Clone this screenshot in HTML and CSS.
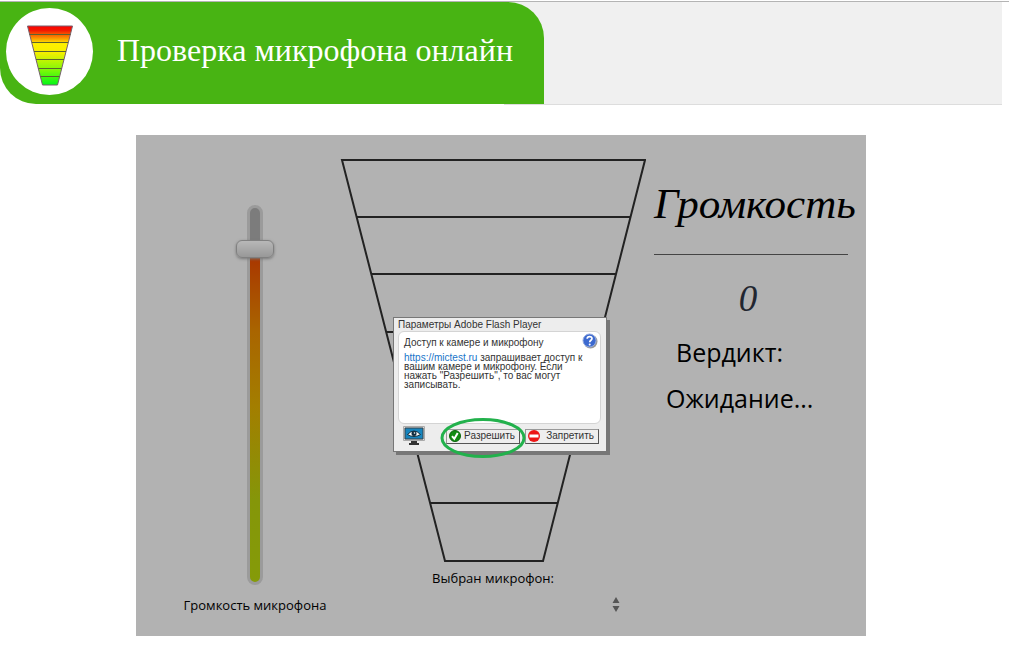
FILE: index.html
```html
<!DOCTYPE html>
<html lang="ru">
<head>
<meta charset="utf-8">
<title>Проверка микрофона онлайн</title>
<link rel="stylesheet" href="styles.css">
</head>
<body>
<header class="site-header">
  <div class="brand">
    <a class="logo" href="#" aria-label="На главную">
      <svg width="48" height="64" viewBox="0 0 48 64" aria-hidden="true">
        <defs>
          <linearGradient id="level" x1="0" y1="0" x2="0" y2="1">
            <stop offset="0" stop-color="#f00"/>
            <stop offset=".07" stop-color="#f21400"/>
            <stop offset=".3" stop-color="#fff000"/>
            <stop offset=".45" stop-color="#f5f000"/>
            <stop offset=".75" stop-color="#7df808"/>
            <stop offset="1" stop-color="#00f818"/>
          </linearGradient>
        </defs>
        <path d="M1.500 2H46.500L31.500 61H16.500Z" fill="url(#level)" stroke="#77606e"/>
        <path d="M3.500 10.500H44.500M6 18.500H42M8 27.500H40M10 35.500H38M12.500 44.500H35.500M14.500 52.500H33.500" stroke="#5b6330" fill="none"/>
      </svg>
    </a>
    <h1 class="title">Проверка микрофона онлайн</h1>
  </div>
</header>
<div class="page">
<main class="panel">
  <section class="volume">
    <input class="slider" id="volume" type="range" min="0" max="100" value="91">
    <label class="caption" for="volume">Громкость микрофона</label>
  </section>
  <section class="meter">
    <svg class="funnel" width="306" height="404" viewBox="0 0 306 404" aria-hidden="true">
      <path d="M2 2H305L203 403H105ZM17 59H290M31 116H276M46 174H261M61 231H247M76 288H232M90 345H217" fill="none" stroke="#222" stroke-width="2"/>
    </svg>
    <label class="caption" for="mic">Выбран микрофон:</label>
    <div class="picker">
      <select class="mic-select" id="mic"><option value=""></option></select>
      <svg class="arrows" width="8" height="16" viewBox="0 0 8 16" aria-hidden="true"><path d="M.5 7L4 1L7.500 7ZM.5 10H7.500L4 16Z" fill="#555"/></svg>
    </div>
  </section>
  <section class="result">
    <h2 class="result-title">Громкость</h2>
    <output class="value">0</output>
    <p class="verdict">Вердикт:</p>
    <p class="status">Ожидание...</p>
  </section>

  <div class="dialog" role="dialog" aria-labelledby="dialog-title">
    <h3 class="dialog-title" id="dialog-title">Параметры Adobe Flash Player</h3>
    <div class="dialog-body">
      <button class="help" type="button" aria-label="Справка">
        <svg width="16" height="16" viewBox="0 0 16 16" aria-hidden="true">
          <circle cx="8.500" cy="8.500" r="7" fill="#999"/>
          <circle cx="7.500" cy="7.500" r="6.500" fill="#3c69cf" stroke="#91a9df"/>
          <path d="M5.200 5.700C5.200 2.800 10 2.900 10 5.500C10 7.300 7.700 7.200 7.700 9.300" fill="none" stroke="#fff" stroke-width="1.700"/>
          <circle cx="7.700" cy="11.500" r="1" fill="#fff"/>
        </svg>
      </button>
      <p class="lead">Доступ к камере и микрофону</p>
      <p class="request"><a class="origin" href="#">https://mictest.ru</a> запрашивает доступ к вашим камере и микрофону. Если нажать "Разрешить", то вас могут записывать.</p>
    </div>
    <div class="dialog-actions">
      <svg class="monitor" width="22" height="20" viewBox="0 0 22 20" aria-hidden="true">
        <path d="M.5 .5H21.500V14.500H.5Z" fill="#ddd" stroke="#aaa"/>
        <path d="M2 2H20V13H2Z" fill="#1784bd" stroke="#34434b"/>
        <path d="M8 15H14V17H16V19H6V17H8Z" fill="#333"/>
        <path d="M4.500 8.500Q11 1.500 17.500 8.500Q11 12.500 4.500 8.500Z" fill="#fff" stroke="#152c38"/>
        <circle cx="11" cy="7.500" r="2.500" fill="#102c3e"/><circle cx="11.500" cy="7" r=".8" fill="#fff"/>
      </svg>
      <button class="action" type="button">
        <svg width="12" height="12" viewBox="0 0 12 12" aria-hidden="true"><circle cx="6" cy="6" r="5.500" fill="#128c12" stroke="#0a650a"/><path d="M3 6.200L5.300 8.800L8.700 3" fill="none" stroke="#fff" stroke-width="2"/></svg>
        <span>Разрешить</span>
      </button>
      <button class="action" type="button">
        <svg width="12" height="12" viewBox="0 0 12 12" aria-hidden="true"><circle cx="6" cy="6" r="6" fill="#ec1515"/><path d="M1.500 4.500H10.500V7.500H1.500Z" fill="#fff"/></svg>
        <span>Запретить</span>
      </button>
    </div>
    <svg class="highlight" width="86" height="42" viewBox="0 0 86 42" aria-hidden="true"><ellipse cx="43" cy="21" rx="41" ry="18.500" fill="none" stroke="#22b14c" stroke-width="3"/></svg>
  </div>
</main>
</div>
</body>
</html>
```
FILE: styles.css
```css
* { box-sizing: border-box; }
body {
  margin: 0;
  padding-top: 1px;
  background: #fff;
  color: #000;
  font-family: "Open Sans", "Noto Sans", sans-serif;
}
h1, h2, h3, p { margin: 0; font-weight: 400; }

.site-header {
  display: flex;
  border-top: 1px solid #b4b4b4;
  padding-right: 7px;
}
.site-header::after {
  content: "";
  flex: 1;
  margin-left: -40px;
  background: #f0f0f0;
  border-bottom: 1px solid #ddd;
}
.brand {
  position: relative;
  z-index: 1;
  display: flex;
  align-items: center;
  gap: 24px;
  min-height: 102px;
  margin-bottom: 1px;
  padding: 0 31px 4px 6px;
  background: #48b413;
  border-radius: 0 36px 0 36px;
}
.logo {
  display: flex;
  align-items: center;
  justify-content: center;
  width: 87px;
  height: 87px;
  padding-top: 10px;
  background: #fff;
  border-radius: 50%;
}
.title {
  padding-bottom: 2px;
  color: #fff;
  font: 32px/36px "Liberation Serif", serif;
  white-space: nowrap;
}

.page { padding: 30px 7px 14px 0; }
.panel {
  position: relative;
  display: grid;
  grid-template-columns: 204px 306px 1fr;
  max-width: 730px;
  margin: 0 auto;
  padding: 23px 0 22px;
  background: #b2b2b2;
}
.caption { font-size: 13px; line-height: 18px; white-space: nowrap; }

.volume {
  display: flex;
  flex-direction: column;
  align-items: center;
  gap: 11px;
  padding: 47px 0 0 34px;
}
.slider {
  appearance: none;
  writing-mode: vertical-lr;
  direction: rtl;
  width: 38px;
  height: 380px;
  margin: 0;
  background: transparent;
}
.slider::-webkit-slider-runnable-track {
  width: 16px;
  height: 380px;
  border: 3px solid #9b9b9b;
  border-radius: 8px;
  background: linear-gradient(#7c7c7c 0 10%, #a93700 13%, #a96500 33%, #a37e00 53%, #859609 78%, #859b09);
}
.slider::-webkit-slider-thumb {
  appearance: none;
  width: 38px;
  height: 18px;
  margin-left: -14px;
  border: 1px solid #808080;
  border-radius: 6px;
  background: linear-gradient(#b8b8b8, #989898);
  box-shadow: 0 1px 3px #777;
}

.meter { display: flex; flex-direction: column; align-items: center; }
.funnel { display: block; width: 100%; margin-bottom: 7px; }
.picker { position: relative; width: 254px; margin-top: 8px; }
.mic-select {
  display: block;
  appearance: none;
  width: 100%;
  height: 18px;
  border: 0;
  background: transparent;
}
.arrows { position: absolute; right: 0; top: 1px; pointer-events: none; }

.result {
  display: flex;
  flex-direction: column;
  min-width: 0;
  padding: 22px 18px 0 8px;
}
.result-title {
  height: 75px;
  border-bottom: 1px solid #444;
  font: italic 43px/48px "Liberation Serif", serif;
  white-space: nowrap;
}
.value {
  padding: 24px 6px 0 0;
  color: #222630;
  font: italic 37px/40px "Liberation Serif", serif;
  text-align: center;
}
.verdict, .status { font-size: 25px; line-height: 46px; white-space: nowrap; }
.verdict { padding: 10px 0 0 22px; }
.status { padding-left: 12px; }

.dialog {
  position: absolute;
  top: 182px;
  left: 257px;
  width: 214px;
  padding: 1px 5px 5px 4px;
  border: 1px solid #777;
  background: #ededed;
  box-shadow: 3px 3px 0 #777;
  color: #333;
  font: 10px/9px "Liberation Sans", sans-serif;
}
.dialog-title { font-size: 10px; line-height: 12px; }
.dialog-body {
  position: relative;
  min-height: 93px;
  padding: 6px 10px 5px 5px;
  border: 1px solid #d4d4d4;
  border-radius: 6px;
  background: #fff;
}
.lead { margin-bottom: 6px; }
.origin { color: #1774c9; text-decoration: none; }
.help { position: absolute; top: 1px; right: 2px; display: flex; padding: 0; border: 0; background: none; }
.dialog-actions { display: flex; align-items: center; gap: 5px; padding: 2px 2px 0 0; }
.monitor { margin: 0 auto 0 5px; }
.action {
  display: flex;
  align-items: center;
  justify-content: space-between;
  width: 74px;
  height: 15px;
  padding: 0 4px 0 2px;
  border: 1px solid #555;
  border-top-color: #999;
  border-left-color: #999;
  background: #eee;
  color: #333;
  font: 10px/12px "Liberation Sans", sans-serif;
}
.action svg { flex: none; }
.highlight { position: absolute; left: 46px; bottom: -8px; pointer-events: none; }
```
